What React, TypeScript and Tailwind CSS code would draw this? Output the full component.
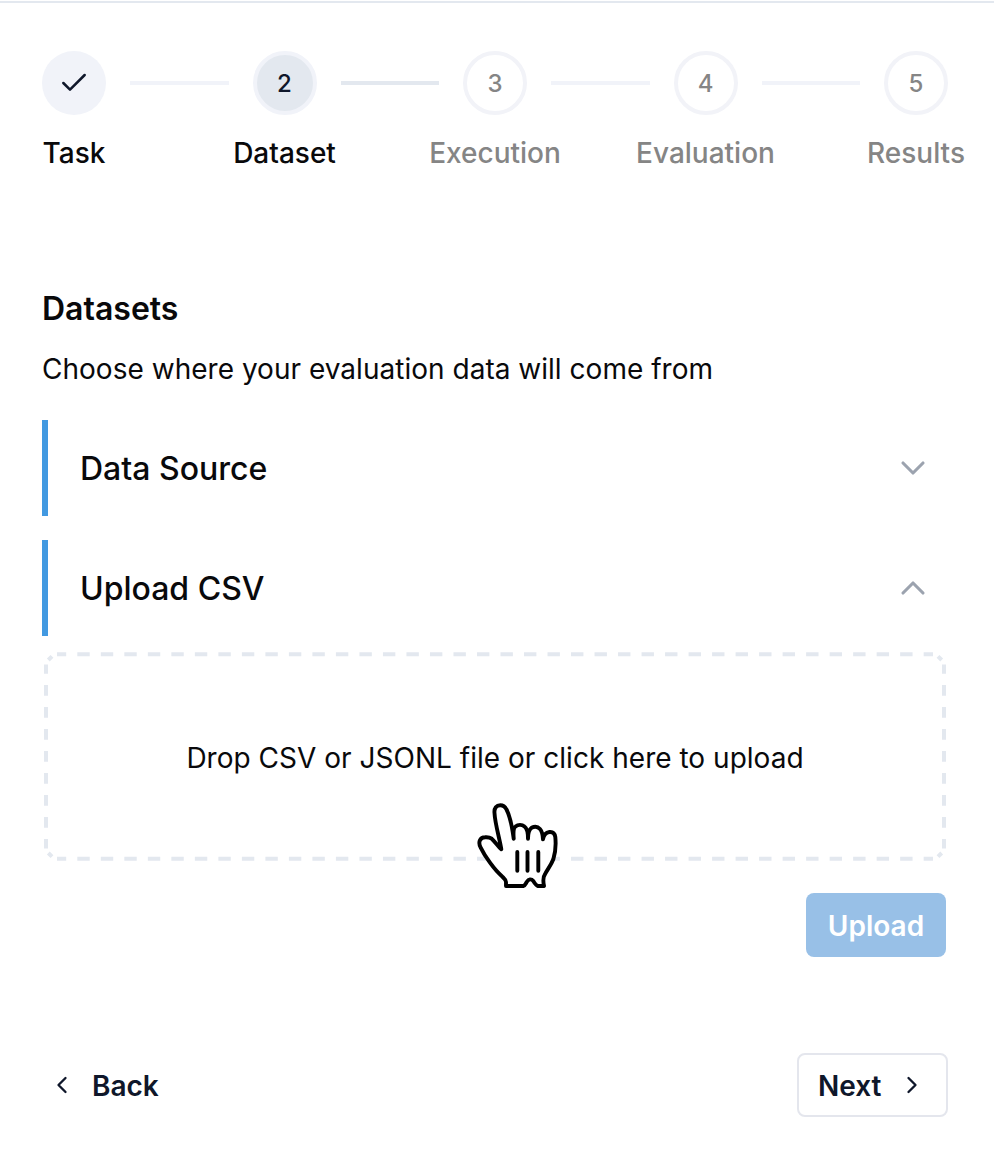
import React from "react";
import { Check, ChevronDown, ChevronLeft, ChevronRight, ChevronUp } from "lucide-react";

const steps = [
  { label: "Task", state: "done" },
  { label: "Dataset", state: "current" },
  { label: "Execution", state: "upcoming" },
  { label: "Evaluation", state: "upcoming" },
  { label: "Results", state: "upcoming" },
];

function StepCircle({ index, state }: { index: number; state: string }) {
  if (state === "done") {
    return (
      <div className="flex size-16 items-center justify-center rounded-full bg-[#f1f3f9] text-[#0f172a]">
        <Check size={32} strokeWidth={1.9} />
      </div>
    );
  }
  if (state === "current") {
    return (
      <div className="flex size-16 items-center justify-center rounded-full border-4 border-[#f1f3f9] bg-[#e3e8ef] pt-0.5 text-2xl font-[460] text-[#0f172a]">
        {index}
      </div>
    );
  }
  return (
    <div className="flex size-16 items-center justify-center rounded-full border-4 border-[#f2f3f8] pt-0.5 text-2xl font-[460] text-[#858585]">
      {index}
    </div>
  );
}

function Stepper() {
  return (
    <div className="flex items-start">
      {steps.map((step, i) => (
        <React.Fragment key={step.label}>
          <div className="flex w-16 shrink-0 flex-col items-center">
            <StepCircle index={i + 1} state={step.state} />
            <span
              className={
                step.state === "upcoming"
                  ? "mt-[18px] text-[28px] leading-10 font-medium whitespace-nowrap text-[#858585]"
                  : "mt-[18px] text-[28px] leading-10 font-medium whitespace-nowrap text-[#09090b]"
              }
            >
              {step.label}
            </span>
          </div>
          {i < steps.length - 1 && (
            <div
              className={
                step.state === "current"
                  ? "mx-6 mt-[30px] h-1 flex-1 bg-[#e3e8ef]"
                  : "mx-6 mt-[30px] h-1 flex-1 bg-[#f1f3f9]"
              }
            />
          )}
        </React.Fragment>
      ))}
    </div>
  );
}

function AccordionHeader({ title, open }: { title: string; open: boolean }) {
  const Icon = open ? ChevronUp : ChevronDown;
  return (
    <button className="flex h-24 w-full items-center justify-between border-l-6 border-[#4299e1] pr-[15px] pl-8 text-left">
      <span className="pt-0.5 text-[32px] font-medium">{title}</span>
      <Icon size={40} strokeWidth={1.9} className="text-[#9ca3af]" />
    </button>
  );
}

function DashedFrame() {
  return (
    <svg className="absolute inset-0 size-full" viewBox="0 0 902 209" fill="none" stroke="#e3e8ef" strokeWidth={4}>
      <path d="M13 2.25H889M13 206.750H889" strokeDasharray="12.4 11.11" strokeDashoffset="3.2" />
      <path d="M2 12.500V196.500M900 12.500V196.500" strokeDasharray="10.8 11.2" strokeDashoffset="1.5" />
      <path d="M4.300 8L8 4.300M894 4.300L897.700 8M4.300 201L8 204.700M894 204.700L897.700 201" />
    </svg>
  );
}

function PointerHand() {
  return (
    <svg
      className="absolute top-[150px] left-[432px] h-[88px] w-[84px]"
      viewBox="476 802 84 88"
      fill="white"
      stroke="black"
      strokeWidth={3.9}
      strokeLinecap="round"
      strokeLinejoin="round"
    >
      <path d="M506 886V882C506 879.500 503.500 878 501.700 876C497 872 493.500 867.500 490 862.700C486.500 858 483 852.500 480.700 847.700C477.500 841.500 480.500 837.500 485 837.300C488.500 837 490 837.500 491.700 838.700C495 841.500 498 846.500 501.300 849.300C500 840 495 824 494.500 813C494 808 496.500 805.200 500.300 805.200C503 805.200 505 806.500 506.500 809.500C511 818 512.300 829 513.700 838.700C513.200 832 513.300 828 515.500 826.500C518 824.500 522 824.500 524.500 826.500C527.500 828.700 528 833.500 528 838.700C528 833.500 529 829.500 531.500 827.800C534.500 826.300 538 826.800 540 829C542.300 831.500 542.800 835.500 543 839.300C543.500 835.500 546 832.500 549.500 832C553 831.700 554.800 833.500 555.300 837C556.200 846 555.300 853 553.300 859.300C551 865.500 547 870 545 874.300C542.500 877.500 543 881 544 886H538C536 885.500 534.500 883 533.300 881C531.300 878.600 528.700 878.800 526.700 882C525.500 884 525 885.700 523.300 886Z" />
      <path d="M517.300 852V870.700M527.500 852V870.700M538.300 852V870.700" />
    </svg>
  );
}

export default function App() {
  return (
    <main className="h-[1171px] w-[994px] overflow-hidden bg-white pt-px font-['Inter',sans-serif] text-[#09090b]">
      <div className="h-0.5 bg-[#e3e8ef]" />
      <div className="pt-12 pr-[46px] pl-[42px]">
        <Stepper />
        <h2 className="mt-[116px] text-[32px] leading-10 font-semibold">Datasets</h2>
        <p className="mt-5 text-[28px] leading-10 tracking-[0.02px]">Choose where your evaluation data will come from</p>
        <div className="mt-[31px] flex flex-col gap-6">
          <AccordionHeader title="Data Source" open={false} />
          <AccordionHeader title="Upload CSV" open />
        </div>
        <div className="relative mt-4 ml-0.5 flex h-[209px] w-[902px] items-center justify-center pt-0.5 text-[28px]">
          <DashedFrame />
          <span className="tracking-[0.02px]">Drop CSV or JSONL file or click here to upload</span>
          <PointerHand />
        </div>
        <div className="mt-8 flex justify-end pr-0.5">
          <button className="h-16 w-[140px] rounded-lg bg-[#98c0e7] pt-0.5 text-[28px] font-semibold text-white">
            Upload
          </button>
        </div>
        <div className="mt-24 flex items-center justify-between text-[28px] font-semibold text-[#0f172a]">
          <button className="flex h-16 items-center gap-4 pl-1.5">
            <ChevronLeft size={28} strokeWidth={2} />
            <span className="pt-0.5">Back</span>
          </button>
          <button className="flex h-16 w-[151px] items-center gap-4 rounded-lg border-2 border-[#e4e6ed] pl-[19px]">
            <span className="pt-0.5">Next</span>
            <ChevronRight size={28} strokeWidth={2} />
          </button>
        </div>
      </div>
    </main>
  );
}
